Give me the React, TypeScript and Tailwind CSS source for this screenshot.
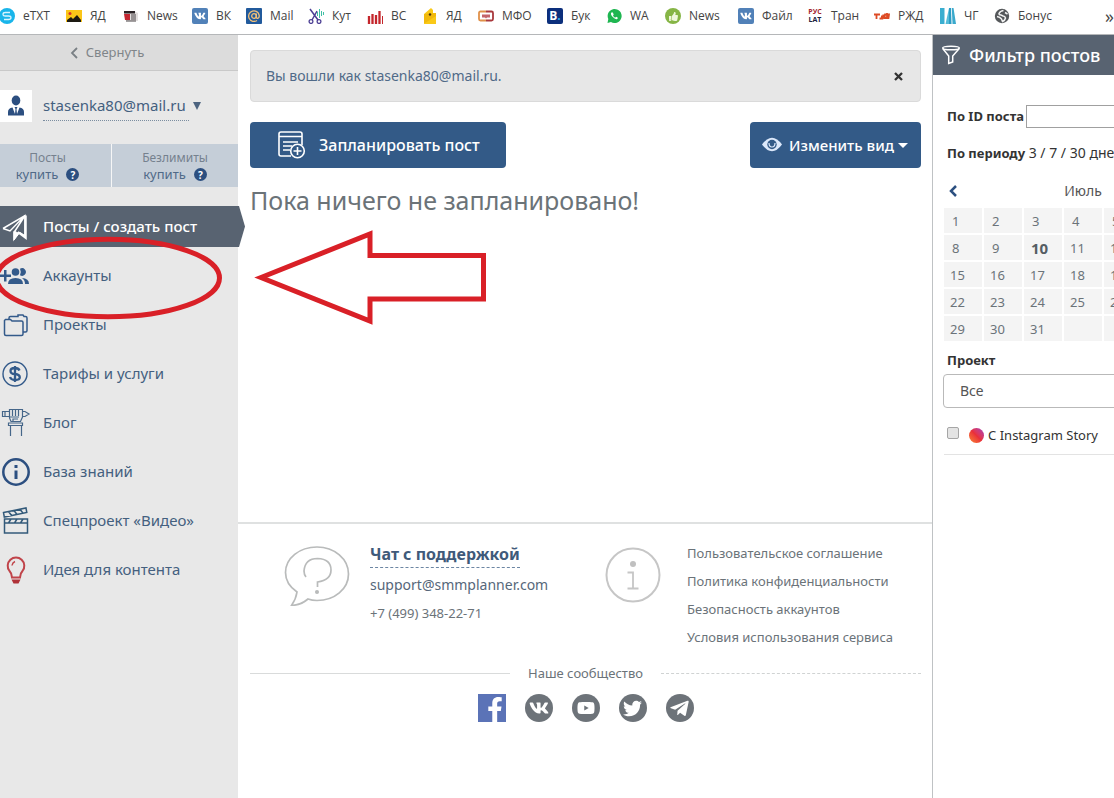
import type { ReactNode } from "react";
import { FaFacebookF, FaTelegramPlane, FaTwitter, FaVk, FaWhatsapp, FaYoutube, FaThumbsUp } from "react-icons/fa";

const S = "h-4 w-4 shrink-0";

const VkTile = () => (
  <span className="flex h-4 w-4 shrink-0 items-center justify-center rounded-xs bg-[#5181b8] text-white">
    <FaVk size={12} />
  </span>
);

const bookmarks: { label: string; w: string; icon: ReactNode }[] = [
  {
    label: "eTXT",
    w: "w-[67px]",
    icon: (
      <svg className={S} viewBox="0 0 16 16">
        <circle cx="8" cy="8" r="8" fill="#19b5ea" />
        <path d="M11 4.500H6.500Q4 4.500 4 6.300T6.500 8h3Q12 8 12 9.700T9.500 11.500H5" fill="none" stroke="#d8f4ff" strokeWidth="1.300" />
      </svg>
    ),
  },
  {
    label: "ЯД",
    w: "w-[57px]",
    icon: (
      <svg className={S} viewBox="0 0 16 16">
        <rect y="2" width="16" height="12" fill="#fbc618" />
        <circle cx="4" cy="5.500" r="1.500" fill="#d8322a" />
        <path d="M1 14v-2l4-3 2 2 4-4 4 5v2z" fill="#1d1a12" />
      </svg>
    ),
  },
  {
    label: "News",
    w: "w-[69px]",
    icon: (
      <svg className={S} viewBox="0 0 16 16">
        <path d="M1 3h10l4 2v8H3z" fill="#e4e0e0" />
        <path d="M1 3h11v2.500H1z" fill="#2a2326" />
        <path d="M1 6h6v6H2z" fill="#c22530" />
        <path d="M8 7h5M8 9h5M8 11h5M3 13h10" stroke="#4a4446" />
      </svg>
    ),
  },
  { label: "ВК", w: "w-[54px]", icon: <VkTile /> },
  {
    label: "Mail",
    w: "w-[62px]",
    icon: (
      <svg className={S} viewBox="0 0 16 16">
        <rect width="16" height="16" rx="1" fill="#215a9c" />
        <circle cx="8" cy="8" r="2.300" fill="none" stroke="#f2c078" strokeWidth="1.300" />
        <path d="M10.300 5.500V9q.3 1.600 1.700 1.300 1.500-1 1.200-3A5.300 5.300 0 1 0 11 12.500" fill="none" stroke="#f2c078" strokeWidth="1.300" />
      </svg>
    ),
  },
  {
    label: "Кут",
    w: "w-[59px]",
    icon: (
      <svg className={S} viewBox="0 0 16 16" fill="none">
        <path d="M2 1l8 11M9 3L4 12" stroke="#4c3f94" strokeWidth="1.500" />
        <circle cx="3" cy="13.500" r="1.900" stroke="#4c3f94" strokeWidth="1.300" />
        <circle cx="11" cy="13.500" r="1.900" stroke="#4c3f94" strokeWidth="1.300" />
        <path d="M9.500 4v4M11.500 1v9M13.500 3v5M15.500 4v3" stroke="#3fbfa5" />
      </svg>
    ),
  },
  {
    label: "ВС",
    w: "w-[55px]",
    icon: (
      <svg className={S} viewBox="0 0 16 16">
        <path d="M2 8v8M5.500 6v10M9 7v9M12.500 3v13" stroke="#c4262c" strokeWidth="2.300" />
        <path d="M15.500 8v8" stroke="#c4262c" />
      </svg>
    ),
  },
  {
    label: "ЯД",
    w: "w-[56px]",
    icon: (
      <svg className={S} viewBox="0 0 16 16">
        <path d="M2 6l7-6 2 2v3h3v11H2z" fill="#fac917" />
        <path d="M2 6l12-1v3L3 15H2z" fill="#f1b90c" />
        <circle cx="8" cy="6.500" r="1.200" fill="#4a3410" />
      </svg>
    ),
  },
  {
    label: "МФО",
    w: "w-[69px]",
    icon: (
      <svg className={S} viewBox="0 0 16 16">
        <path d="M8 3.500H2.500Q1 3.500 1 5v6q0 1.500 1.500 1.500H8" fill="none" stroke="#e0914a" strokeWidth="1.800" />
        <path d="M8 3.500h5.500Q15 3.500 15 5v6q0 1.500-1.500 1.500H8" fill="none" stroke="#a8383c" strokeWidth="1.800" />
        <path d="M4 6.500h8v3H9l-1 1-1-1H4z" fill="#c4646a" />
      </svg>
    ),
  },
  {
    label: "Бук",
    w: "w-[59px]",
    icon: (
      <span className="flex h-4 w-4 shrink-0 items-center justify-center rounded-xs bg-[#0c2f7c] text-xs font-bold text-white">
        B<span className="text-[#2fb0ee]">.</span>
      </span>
    ),
  },
  {
    label: "WA",
    w: "w-[59px]",
    icon: (
      <svg className={S} viewBox="0 0 16 16">
        <path d="M1.500 15l.8-4A7 7 0 1 1 5 14z" fill="#1fb651" />
        <path d="M5.500 4.500q-1.500 1.500 1 4.300t4.500 2.400q1.300-1 .6-1.600l-1.500-.8-1 .9Q7.500 8.900 7 7.400l.7-.8-.8-1.900q-.6-.6-1.400-.2z" fill="#fff" />
      </svg>
    ),
  },
  {
    label: "News",
    w: "w-[73px]",
    icon: (
      <span className="flex h-4 w-4 shrink-0 items-center justify-center rounded-full bg-[#86b546] text-[#eef7dc]">
        <FaThumbsUp size={9} />
      </span>
    ),
  },
  { label: "Файл", w: "w-[69px]", icon: <VkTile /> },
  {
    label: "Тран",
    w: "w-[67px]",
    icon: (
      <span className="flex h-4 w-4 shrink-0 flex-col items-center justify-center text-[7px] leading-[8px] font-bold">
        <span className="text-[#a5262e]">РУС</span>
        <span className="text-[#20203c]">LAT</span>
      </span>
    ),
  },
  {
    label: "РЖД",
    w: "w-[66px]",
    icon: (
      <svg className={S} viewBox="0 0 16 16" fill="none" stroke="#dd4a24" strokeWidth="1.800">
        <path d="M0 6.500h6M2.500 6.500V11M5.500 10.500h3l1-4M7 8.500h3M10.500 10h4l.5-3.500h-4zM13 5v6" />
      </svg>
    ),
  },
  {
    label: "ЧГ",
    w: "w-[54px]",
    icon: (
      <svg className={S} viewBox="0 0 16 16">
        <path d="M0 0h4.500v16H0z" fill="#3aaed0" />
        <path d="M9 0l-3.500 16H9z" fill="#55bcd8" />
        <path d="M9 0h2l.5 16H9z" fill="#2c9cc4" />
        <path d="M11.800 0h1.700L16 16h-3.500z" fill="#3aa9cc" />
      </svg>
    ),
  },
  {
    label: "Бонус",
    w: "w-[70px]",
    icon: (
      <svg className={S} viewBox="0 0 16 16">
        <circle cx="8" cy="8" r="7.200" fill="#55585b" />
        <path d="M9.500 2.500Q6 3 5 5.500q0 1.500 2 1.500l2 1q2 0 2.500 2-.5 2.500-3 3.500l-1-2.500Q6 9 3 8.500M11 4.500l2.500 1.500" fill="none" stroke="#f2f2f2" strokeWidth="1.500" />
      </svg>
    ),
  },
];

const I = "h-8 w-8 shrink-0";

const PlaneIcon = () => (
  <svg className={I} viewBox="0 0 32 32" fill="none" stroke="#fff">
    <path d="M3 17.500L25 4.500v20.500l-7-4M3 17.500l7 2.500L25 4.500 14 21.500v6.500l4-6" strokeWidth="1.500" />
    <path d="M25.500 4.500V26.500l-6-4.500" strokeWidth="2.500" />
    <path d="M14 20v9l5-6.500z" fill="#fff" />
  </svg>
);

const menu: { label: string; icon: ReactNode; active?: boolean }[] = [
  { label: "Посты / создать пост", icon: <PlaneIcon />, active: true },
  {
    label: "Аккаунты",
    icon: (
      <svg className={I} viewBox="0 0 32 32" fill="#335a8a">
        <path d="M0 14.500h4V10h2.500v4.500H11V17H6.500v4.500H4V17H0z" />
        <circle cx="15.500" cy="12" r="3.800" />
        <path d="M8 24q0-6 7.500-6t7.500 6z" />
        <path d="M20 8.800a3.800 3.800 0 1 1 0 6.400q1.600-3.200 0-6.400zM22 18q7 .4 7 6h-4q0-4-3-6z" />
      </svg>
    ),
  },
  {
    label: "Проекты",
    icon: (
      <svg className={I} viewBox="0 0 32 32" fill="none" stroke="#335a8a" strokeWidth="1.500">
        <path d="M5.500 10.500h5l1.500 1.500h9.500q1.500 0 1.500 1.500V25q0 1.500-1.500 1.500H6q-1.500 0-1.500-1.500V11.500z" />
        <path d="M9 10.500V9q0-1.500 1.500-1.500H18V6h5l1 1.500h1.500q1.500 0 1.500 1.500v12.500q0 1.500-1.500 1.500H23" />
      </svg>
    ),
  },
  {
    label: "Тарифы и услуги",
    icon: (
      <svg className={I} viewBox="0 0 32 32" fill="none" stroke="#335a8a">
        <circle cx="15" cy="16" r="12" strokeWidth="1.400" />
        <path d="M19.500 12.500q-1-2.500-4.500-2.500-4.500 0-4.500 3T15 16q4.800.6 4.800 3.300T15 22q-4 0-5-3M15 8v16" strokeWidth="2.300" />
      </svg>
    ),
  },
  {
    label: "Блог",
    icon: (
      <svg className={I} viewBox="0 0 32 32" fill="none" stroke="#456689" strokeWidth="1.200">
        <path d="M2.500 4.500h7v5h-7zM5 4.500v5M22 4.500h3l4 2.500-4 2.500h-3M9.500 2.500h13V10l-2 4.500H11L9.500 11zM12.500 2.500V9M15.500 2.500V9M18.500 2.500V9M10 10h9M8.500 16h14v2.500h-14zM10.500 19v10M21.500 19v10M13 14.500V12h5" />
      </svg>
    ),
  },
  {
    label: "База знаний",
    icon: (
      <svg className={I} viewBox="0 0 32 32" fill="none" stroke="#2c4f80">
        <circle cx="16" cy="16" r="12.700" strokeWidth="2.500" />
        <path d="M16 14.500V23M16 9v3" strokeWidth="3" />
      </svg>
    ),
  },
  {
    label: "Спецпроект «Видео»",
    icon: (
      <svg className={I} viewBox="0 0 32 32" fill="none" stroke="#335a7a" strokeWidth="1.500">
        <path d="M4.500 14h23v14h-23zM4.500 18h23M3.500 7.500l22.500-4.500.8 4.500-22.500 4.500zM8.500 6.500l3 4M14 5.500l3 4M20 4.300l3 4M11 14l-2.500 4M17 14l-2.500 4M23 14l-2.500 4" />
      </svg>
    ),
  },
  {
    label: "Идея для контента",
    icon: (
      <svg className={I} viewBox="0 0 32 32" fill="none" stroke="#c0444a">
        <path d="M12 23.500q0-4-2.500-6.500a8.300 8.300 0 1 1 13 0Q20 19.500 20 23.500z" strokeWidth="2" />
        <path d="M12 11.500q.5-3 3-4" strokeWidth="1.500" />
        <path d="M11.500 25.500h9l-2 4h-5z" fill="#b03238" stroke="none" />
      </svg>
    ),
  },
];

const HelpDot = () => (
  <span className="ml-2 inline-flex h-[13px] w-[13px] items-center justify-center rounded-full bg-[#2c4f80] text-[10px] leading-3 font-bold text-white">
    ?
  </span>
);

function Sidebar() {
  return (
    <aside className="w-[238px] shrink-0 bg-[#e8e8e8] text-[#44607f]">
      <button className="flex h-9 w-full items-center justify-center gap-2 border-b border-[#c9c9c9] bg-[#dcdcdc] pr-6 text-[13px] text-[#808589]">
        <svg className="h-3 w-2" viewBox="0 0 8 12" fill="none" stroke="#7a8085" strokeWidth="1.800">
          <path d="M7 1L2 6l5 5" />
        </svg>
        Свернуть
      </button>
      <div className="mt-[19px] flex gap-[11px]">
        <span className="flex h-8 w-8 items-center justify-center bg-white">
          <svg className="h-6 w-5" viewBox="0 0 20 24" fill="#2c4f80">
            <ellipse cx="10" cy="6.500" rx="4.300" ry="5" />
            <path d="M2 21.500V18q0-4 4.500-4.500L9 20l.5-5-1-2h3l-1 2 .5 5 2.500-6.500Q18 14 18 18v3.500z" />
          </svg>
        </span>
        <button className="flex h-[31px] items-center gap-1 text-[15px]">
          <span className="flex h-full items-center border-b border-dotted border-[#7b8da0] pr-[3px]">stasenka80@mail.ru</span>
          <span className="border-x-4 border-t-8 border-x-transparent border-t-[#4d6480]" />
        </button>
      </div>
      <div className="mt-[22px] flex h-[43px] gap-px bg-[#f6f6f6] text-center text-xs">
        <button className="w-[111px] bg-[#c5ced8] pr-4 leading-[17px] text-[#75818e]">
          Посты
          <span className="block text-[13px] text-[#506a88]">
            купить
            <HelpDot />
          </span>
        </button>
        <button className="flex-1 bg-[#c5ced8] leading-[17px] text-[#75818e]">
          Безлимиты
          <span className="block text-[13px] text-[#506a88]">
            купить
            <HelpDot />
          </span>
        </button>
      </div>
      <nav className="mt-[19px] flex flex-col gap-2 text-[15px]">
        {menu.map((m) => (
          <a
            key={m.label}
            href="#"
            className={
              m.active
                ? "relative flex h-[41px] items-center gap-[11px] bg-[#586371] font-medium text-white"
                : "flex h-[41px] items-center gap-[11px]"
            }
          >
            {m.icon}
            {m.label}
            {m.active && (
              <svg className="absolute top-0 left-full h-full w-[7px]" viewBox="0 0 7 41" preserveAspectRatio="none">
                <path d="M0 0l1 0 6 20.500L1 41H0z" fill="#586371" />
              </svg>
            )}
          </a>
        ))}
      </nav>
    </aside>
  );
}

function Footer() {
  const round = "flex h-7 w-7 items-center justify-center rounded-full bg-[#6d7379] text-white";
  return (
    <footer className="border-t-2 border-[#dfe1e1] pr-[11px] pl-3">
      <div className="flex h-[137px] pt-[18px] text-[#6b7379]">
        <svg className="ml-[34px] h-16 w-[68px] shrink-0" viewBox="0 0 68 64" fill="none" stroke="#b9bbbb" strokeWidth="1.700">
          <path d="M13 50Q1.500 42 1.500 30.500C1.500 16 15.500 5 33 5s31.500 12 31.500 27S50.500 58.500 33 58.500q-5 0-9-1.500-7 6-16.500 6.500Q12 57 13 50z" />
          <path d="M22 35q-2-2.500-2-6 1-12.500 13.500-12.500Q47 17 47 28q0 10-13.500 12v5" />
          <circle cx="33" cy="50" r="1.200" fill="#b9bbbb" />
        </svg>
        <div className="ml-[18px] w-[236px] shrink-0">
          <a href="#" className="inline-block border-b border-dashed border-[#6c86a3] text-base leading-[25px] font-bold text-[#3f5a7a]">
            Чат с поддержкой
          </a>
          <a href="#" className="mt-[3px] block text-sm leading-7 text-[#56677a]">
            support@smmplanner.com
          </a>
          <p className="text-[13px] leading-7">+7 (499) 348-22-71</p>
        </div>
        <svg className="-ml-px h-16 w-14 shrink-0" viewBox="0 0 56 64" fill="none" stroke="#c6c6c6">
          <circle cx="28" cy="33" r="26.500" strokeWidth="2" />
          <path d="M22.500 30.500H28V46.500M22.500 46.500h11" strokeWidth="1.800" />
          <circle cx="28" cy="22" r="3" fill="#c0c0c0" stroke="none" />
        </svg>
        <div className="-mt-[3px] ml-[26px] flex flex-col text-[13px] leading-7 whitespace-nowrap">
          <a href="#">Пользовательское соглашение</a>
          <a href="#">Политика конфиденциальности</a>
          <a href="#">Безопасность аккаунтов</a>
          <a href="#">Условия использования сервиса</a>
        </div>
      </div>
      <div className="flex items-center gap-[18px] text-[13px] leading-6 text-[#6b7379]">
        <span className="flex-1 border-t border-[#d9dbdb]" />
        Наше сообщество
        <span className="flex-1 border-t border-dashed border-[#d0d3d3]" />
      </div>
      <div className="mt-[9px] flex justify-center gap-[19px]">
        <a href="#" aria-label="Facebook" className="flex h-7 w-7 items-end justify-end bg-[#5b73b7] pr-[3px] text-white">
          <FaFacebookF className="h-[25px] w-4" />
        </a>
        <a href="#" aria-label="ВКонтакте" className={round}>
          <FaVk size={20} />
        </a>
        <a href="#" aria-label="YouTube" className={round}>
          <FaYoutube size={18} />
        </a>
        <a href="#" aria-label="Twitter" className={round}>
          <FaTwitter size={19} />
        </a>
        <a href="#" aria-label="Telegram" className={round}>
          <FaTelegramPlane size={21} />
        </a>
      </div>
    </footer>
  );
}

function Main() {
  return (
    <main className="flex min-w-0 flex-1 flex-col">
      <div className="min-h-[487px] pt-[15px] pr-[11px] pl-3">
        <div className="flex h-[52px] items-center justify-between rounded border border-[#dadada] bg-[#e7e7e7] px-[15px] text-sm text-[#506a88]">
          Вы вошли как stasenka80@mail.ru.
          <button aria-label="Закрыть" className="p-[2px]">
            <svg className="h-[9px] w-[9px]" viewBox="0 0 9 9" stroke="#333" strokeWidth="2.300">
              <path d="M1 1l7 7M8 1L1 8" />
            </svg>
          </button>
        </div>
        <div className="mt-5 flex justify-between font-medium text-white">
          <button className="flex h-[46px] w-64 items-center gap-3 rounded bg-[#335a87] pl-[27px] text-base">
            <svg className="h-[30px] w-[30px]" viewBox="0 0 30 30" fill="none" stroke="#fff" strokeWidth="1.600">
              <path d="M14 26H4q-2 0-2-2V4q0-2 2-2h19q2 0 2 2v11M2 6.500h23M6 12h15M6 16h9M6 20h7" />
              <circle cx="20.500" cy="21" r="6.800" />
              <path d="M20.500 17v8M16.500 21h8" />
            </svg>
            Запланировать пост
          </button>
          <button className="flex h-[46px] w-[171px] items-center rounded bg-[#335a87] pl-3 text-[15px]">
            <svg className="mr-[7px] h-4 w-5" viewBox="0 0 20 16">
              <path d="M0 7.500Q10-6 20 7.500 10 21 0 7.500z" fill="#dce8fa" />
              <circle cx="10" cy="7.500" r="4.700" fill="#335a87" />
              <path d="M7 6q0 4 3 4t3-4" fill="none" stroke="#dce8fa" strokeWidth="1.200" />
            </svg>
            Изменить вид
            <span className="ml-1 border-x-[5px] border-t-[5px] border-x-transparent border-t-white" />
          </button>
        </div>
        <h1 className="mt-3 text-[25px] leading-10 text-[#6b7378]">Пока ничего не запланировано!</h1>
      </div>
      <Footer />
    </main>
  );
}

const weeks = [0, 1, 2, 3, 4].map((w) => [1, 2, 3, 4, 5, 6, 7].map((d) => w * 7 + d));

function FilterPanel() {
  return (
    <aside className="w-[182px] shrink-0 overflow-hidden border-l border-[#bfc2c4] text-sm text-[#333]">
      <div className="w-[304px]">
        <h2 className="flex h-10 items-center gap-2 bg-[#586371] pl-2 text-lg font-medium text-white">
          <svg className="h-5 w-5" viewBox="0 0 20 20" fill="none" stroke="#fff" strokeWidth="1.500">
            <ellipse cx="10" cy="3" rx="8.300" ry="1.800" />
            <path d="M1.700 3.500l6 7.500v7.500l4-1.500v-6l6.600-7.500" />
          </svg>
          Фильтр постов
        </h2>
        <div className="pt-[30px] pl-[11px]">
          <div className="flex items-center pl-[3px]">
            <label htmlFor="post-id" className="text-[13px] font-bold">
              По ID поста
            </label>
            <input id="post-id" className="ml-[2px] h-[23px] w-[170px] border border-[#a0a0a0] px-1" />
          </div>
          <p className="mt-[13px] pl-[3px] leading-6">
            <b className="text-[13px]">По периоду</b> 3 / 7 / <a href="#">30</a> дней
          </p>
          <div className="mt-[14px] flex h-6 w-[278px] items-center">
            <button aria-label="Предыдущий месяц" className="w-5 pl-1">
              <svg className="h-3 w-[10px]" viewBox="0 0 10 12" fill="none" stroke="#2c4f80" strokeWidth="2.500">
                <path d="M8 1L3 6l5 5" />
              </svg>
            </button>
            <span className="flex-1 pr-5 text-center text-[#555]">Июль</span>
          </div>
          <table className="mt-[3px] -mb-[2px] -ml-[2px] w-[282px] table-fixed border-separate border-spacing-x-[2px] border-spacing-y-[2px] text-[13px] text-[#6b7379]">
            <tbody>
              {weeks.map((row) => (
                <tr key={row[0]}>
                  {row.map((d) => (
                    <td
                      key={d}
                      className={
                        d === 10
                          ? "h-[25px] bg-[#f4f4f4] pl-[7px] text-[15px] leading-5 font-bold text-[#555d63]"
                          : d < 10
                            ? "h-[25px] bg-[#f4f4f4] pl-2 leading-5"
                            : "h-[25px] bg-[#f4f4f4] pl-[6px] leading-5"
                      }
                    >
                      {d <= 31 ? d : ""}
                    </td>
                  ))}
                </tr>
              ))}
            </tbody>
          </table>
          <label htmlFor="project" className="mt-[7px] block pl-[3px] text-[13px] leading-6 font-bold">
            Проект
          </label>
          <select
            id="project"
            className="mt-[2px] -ml-px block h-[34px] w-[280px] appearance-none rounded border border-[#b9b9b9] bg-white pl-4 text-[#555]"
          >
            <option>Все</option>
          </select>
          <div className="flex h-[47px] w-[278px] items-center border-b border-[#e3e3e3] pt-2 pl-[3px]">
            <input
              id="story"
              type="checkbox"
              className="mb-1 h-3 w-3 appearance-none rounded-xs border border-[#a6a6a6] bg-[#e4e4e4]"
            />
            <label htmlFor="story" className="ml-[10px] flex items-center gap-1 text-[13px]">
              <span className="h-[15px] w-[15px] rounded-full bg-linear-to-tr from-[#f9802f] via-[#ea2f3a] to-[#a832b8]" />
              С Instagram Story
            </label>
          </div>
        </div>
      </div>
    </aside>
  );
}

export default function App() {
  return (
    <div className="relative flex min-h-screen flex-col overflow-hidden bg-white font-['Noto_Sans','Open_Sans',sans-serif]">
      <header className="flex h-[35px] items-center overflow-hidden border-b border-[#b5b7b9] pb-[2px] font-['Open_Sans',sans-serif] text-xs text-[#444]">
        <div className="-ml-px flex">
          {bookmarks.map((b, i) => (
            <a key={i} href="#" className={`flex shrink-0 items-center gap-2 whitespace-nowrap ${b.w}`}>
              {b.icon}
              {b.label}
            </a>
          ))}
        </div>
        <button aria-label="Другие закладки" className="ml-auto text-lg leading-4 text-[#444]">
          »
        </button>
      </header>
      <div className="flex flex-1">
        <Sidebar />
        <Main />
        <FilterPanel />
      </div>
      <svg
        className="pointer-events-none absolute top-0 left-0 h-[340px] w-[500px]"
        viewBox="0 0 500 340"
        fill="none"
        stroke="#d92027"
        strokeWidth="5"
      >
        <ellipse cx="108" cy="278" rx="111.500" ry="38.800" />
        <path d="M261 277.500L370 234v21.500h113.500V299H370v22z" />
      </svg>
    </div>
  );
}
